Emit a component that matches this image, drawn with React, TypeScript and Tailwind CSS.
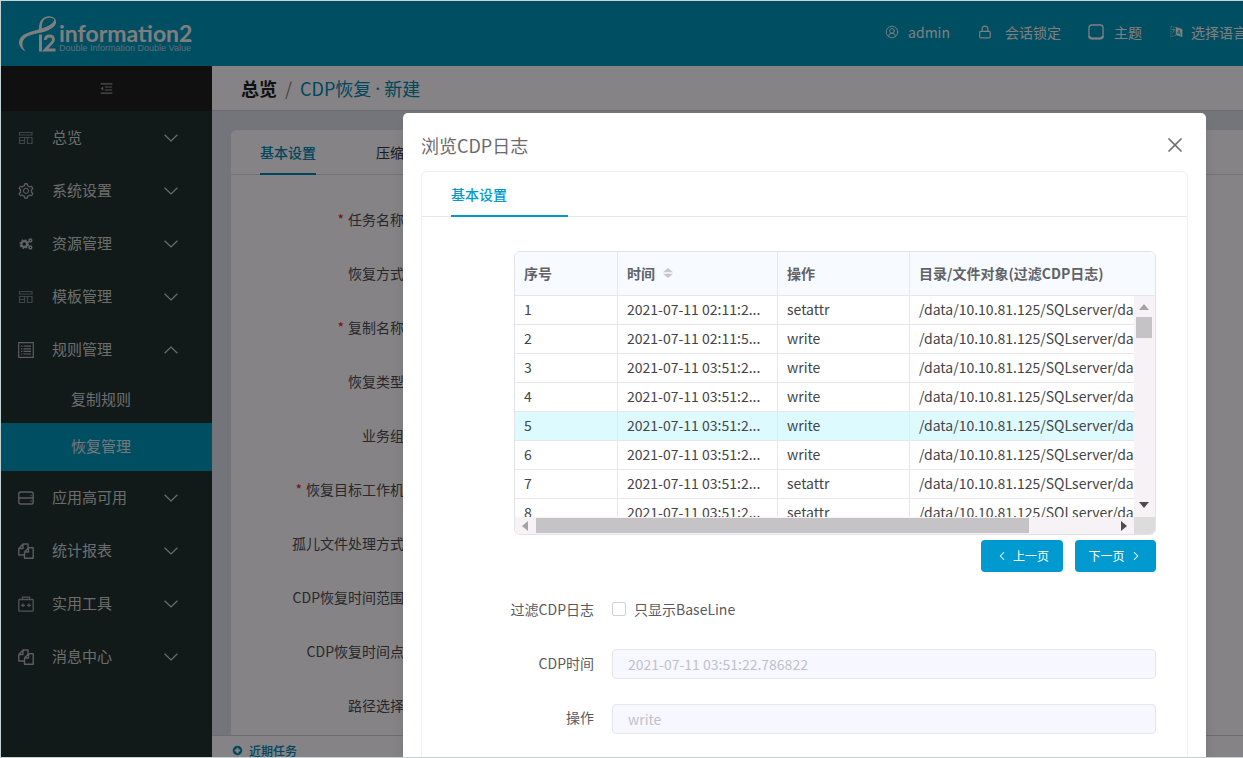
import React from "react";
import { CircleUserRound, Lock, X, ChevronLeft, ChevronRight } from "lucide-react";
import { AiOutlineMenuFold, AiOutlineSetting } from "react-icons/ai";

type IconProps = { className?: string };

const TemplateIcon = ({ className }: IconProps) => (
  <svg viewBox="0 0 16 16" className={className} fill="none" stroke="currentColor" strokeWidth="1.2">
    <path d="M1.500 2.500h12.500v2.500H1.500zM1.500 7.500h5v6h-5zM1.500 10.500h5M6.500 7.500H14v6H9.500v-6" />
  </svg>
);

const GearsIcon = ({ className }: IconProps) => (
  <svg viewBox="0 0 16 16" className={className} fill="none" stroke="currentColor">
    <circle cx="6" cy="8" r="3.300" strokeWidth="2.400" />
    <circle cx="6" cy="8" r="5" strokeWidth="1.200" strokeDasharray="2 1.930" />
    <circle cx="13" cy="4" r="1.600" strokeWidth="1.700" />
    <circle cx="13" cy="12" r="1.600" strokeWidth="1.700" />
  </svg>
);

const ListIcon = ({ className }: IconProps) => (
  <svg viewBox="0 0 16 16" className={className} fill="none" stroke="currentColor" strokeWidth="1.200">
    <path d="M.7.7h14.600v14.600H.7zM3 4.200h1.400M5.500 4.200H13M3 6.800h1.400M5.500 6.800H13M3 9.400h1.400M5.500 9.400H13M3 12h1.400M5.500 12H13" />
  </svg>
);

const ServerIcon = ({ className }: IconProps) => (
  <svg viewBox="0 0 16 16" className={className} fill="none" stroke="currentColor" strokeWidth="1.400">
    <rect x=".8" y="2" width="14.400" height="12" rx="1.800" />
    <path d="M.8 8h14.400M12.500 5.500h1M12.500 11h1" />
  </svg>
);

const FilesIcon = ({ className }: IconProps) => (
  <svg viewBox="0 0 16 16" className={className} fill="none" stroke="currentColor" strokeWidth="1.400" strokeLinejoin="round">
    <path d="M6.500 12H.8V5.500L5 1h5v3.500M5 1v4.500H.8" />
    <path d="M6.500 15.200V9l4-4.200h4.700v10.400zM10.500 4.800V9h-4" />
  </svg>
);

const ToolboxIcon = ({ className }: IconProps) => (
  <svg viewBox="0 0 16 16" className={className} fill="none" stroke="currentColor" strokeWidth="1.300">
    <rect x=".8" y="3.500" width="14.400" height="11.700" rx=".8" />
    <path d="M4.500 3.500V1.200h7v2.300" />
    <path d="M3 9.300h4M5 7.600v3.400M9 9.300h4M11 7.600v3.400" />
  </svg>
);

const MenuArrow = ({ className }: IconProps) => (
  <svg viewBox="0 0 14 8" className={className} fill="none" stroke="currentColor" strokeWidth="1.200" aria-hidden="true">
    <path d="M.6.8L7 7 13.400.8" />
  </svg>
);

const ThemeIcon = ({ className }: IconProps) => (
  <svg viewBox="0 0 16 16" className={className} fill="none" stroke="currentColor">
    <rect x="1" y="1" width="14" height="13.500" rx="2.500" strokeWidth="1.300" />
    <path d="M1.200 12.200q.3 2.300 2.500 2.300h8.600q2.200 0 2.500-2.300" strokeWidth="2.200" />
  </svg>
);

const LanguageIcon = ({ className }: IconProps) => (
  <svg viewBox="0 0 16 16" className={className} fill="none" stroke="currentColor">
    <path d="M2 2.500l6 1.500v8l-6 1.500z" strokeWidth=".7" strokeDasharray="1.500 1" />
    <path d="M3.300 6h3M4.800 5v1M3.500 9.500l2.500-3" strokeWidth=".7" />
    <path d="M7.500 3.500l6.500 2v8l-6.500-2z" fill="currentColor" strokeWidth=".5" />
    <path d="M9 10.500l1.600-4 1.800 5M9.600 9.300l2.200.6" stroke="#0096bd" strokeWidth=".8" />
  </svg>
);

const PlusCircleIcon = ({ className }: IconProps) => (
  <svg viewBox="0 0 12 12" className={className} fill="currentColor">
    <path d="M6 .8a5.200 5.200 0 1 0 0 10.400A5.200 5.200 0 0 0 6 .8zM5 3h2v2h2v2H7v2H5V7H3V5h2z" fillRule="evenodd" />
  </svg>
);

const LogoMark = () => (
  <svg viewBox="0 0 38 38" className="h-[38px] w-[38px] shrink-0" fill="none" stroke="currentColor" aria-hidden="true">
    <path
      d="M6.800 36.500C-1.500 33-2.500 24 5 19.500 12 15.500 23 14.500 30 10.500 34 8 36 5.500 35.200 2.800 39.500 7.500 36 12.500 29.500 15.200 21 18.800 9 18.500 4.800 24.500 2.300 28.500 3.500 33 6.800 36.500z"
      fill="currentColor"
      stroke="none"
    />
    <path
      d="M36.800 5.500C35.500 1.500 30 .2 25.800 2.200 21 4.500 19.800 9 20 15.500L23 14.500C22.500 9.500 23.200 5.800 26.500 3.800 29.500 2 34 2.200 36.800 5.500z"
      fill="currentColor"
      stroke="none"
    />
    <path d="M21.500 19.500V36.500" strokeWidth="3" />
    <path d="M26.300 25c.2-2.800 2-4 4.200-4 2.500 0 4 1.400 4 3.400 0 1.700-.9 2.900-2.400 4.400L26 35h10.500" strokeWidth="2.800" />
  </svg>
);

type MenuEntry = {
  label: string;
  icon: React.ReactNode;
  children?: { label: string; active?: boolean }[];
};

const menu: MenuEntry[] = [
  { label: "总览", icon: <TemplateIcon className="h-4 w-4 opacity-50" /> },
  { label: "系统设置", icon: <AiOutlineSetting className="h-[18px] w-[18px] shrink-0 opacity-80" /> },
  { label: "资源管理", icon: <GearsIcon className="h-[14px] w-[14px] opacity-90" /> },
  { label: "模板管理", icon: <TemplateIcon className="h-4 w-4 opacity-50" /> },
  {
    label: "规则管理",
    icon: <ListIcon className="h-4 w-4 opacity-80" />,
    children: [{ label: "复制规则" }, { label: "恢复管理", active: true }],
  },
  { label: "应用高可用", icon: <ServerIcon className="h-4 w-4 opacity-80" /> },
  { label: "统计报表", icon: <FilesIcon className="h-4 w-4 opacity-80" /> },
  { label: "实用工具", icon: <ToolboxIcon className="h-4 w-4 opacity-70" /> },
  { label: "消息中心", icon: <FilesIcon className="h-4 w-4 opacity-80" /> },
];

const pageFields = [
  { label: "任务名称", required: true },
  { label: "恢复方式" },
  { label: "复制名称", required: true },
  { label: "恢复类型" },
  { label: "业务组" },
  { label: "恢复目标工作机", required: true },
  { label: "孤儿文件处理方式" },
  { label: "CDP恢复时间范围" },
  { label: "CDP恢复时间点" },
  { label: "路径选择" },
];

const logPath = "/data/10.10.81.125/SQLserver/da";
const logs = [
  { time: "2021-07-11 02:11:2...", op: "setattr" },
  { time: "2021-07-11 02:11:5...", op: "write" },
  { time: "2021-07-11 03:51:2...", op: "write" },
  { time: "2021-07-11 03:51:2...", op: "write" },
  { time: "2021-07-11 03:51:2...", op: "write" },
  { time: "2021-07-11 03:51:2...", op: "write" },
  { time: "2021-07-11 03:51:2...", op: "setattr" },
  { time: "2021-07-11 03:51:2...", op: "setattr" },
];
const selectedRow = 4;

function Header() {
  return (
    <header className="flex h-[65px] shrink-0 items-center justify-between bg-[#0096bd] pl-[18px] text-[#f3f3f3]">
      <a href="#home" className="flex items-center gap-[2px] text-[#f4f1f4]">
        <LogoMark />
        <span className="flex flex-col pt-[7px]">
          <span className="font-['Lato'] text-[23px] leading-[22px] font-bold">information2</span>
          <span className="font-['Liberation_Sans'] text-[9px] leading-[9px] whitespace-nowrap opacity-70">Double Information Double Value</span>
        </span>
      </a>
      <nav className="-mr-1 flex shrink-0 items-center pb-1 text-sm whitespace-nowrap">
        <button type="button" className="mr-7 flex items-center gap-[9px]">
          <CircleUserRound className="h-[14px] w-[14px]" strokeWidth={1.6} />admin
        </button>
        <button type="button" className="mr-[27px] flex items-center gap-[13px]">
          <Lock className="h-[14px] w-[14px]" strokeWidth={2} />会话锁定
        </button>
        <button type="button" className="mr-[27px] flex items-center gap-[10px]">
          <ThemeIcon className="h-4 w-4" />主题
        </button>
        <button type="button" className="flex items-center gap-[7px]">
          <LanguageIcon className="h-[15px] w-[15px]" />选择语言
        </button>
      </nav>
    </header>
  );
}

function Sidebar() {
  return (
    <aside className="flex w-[211px] shrink-0 flex-col bg-[#213230] text-[#cfd2d2]">
      <button type="button" aria-label="收起菜单" className="flex h-[45px] shrink-0 items-center justify-center bg-[#1f1f1f] text-[#9a9a9a]">
        <AiOutlineMenuFold className="h-[15px] w-[15px]" />
      </button>
      <ul className="text-[15px]">
        {menu.map((item) => (
          <li key={item.label}>
            <button type="button" className="flex h-[53px] w-full items-center pr-[34px] pl-4">
              <span className="flex w-[18px] justify-center">{item.icon}</span>
              <span className="ml-[17px] flex-1 text-left">{item.label}</span>
              {item.children ? (
                <MenuArrow className="h-2 w-[14px] rotate-180" />
              ) : (
                <MenuArrow className="h-2 w-[14px]" />
              )}
            </button>
            {item.children && (
              <ul>
                {item.children.map((child) => (
                  <li key={child.label}>
                    <a
                      href="#rules"
                      className={
                        child.active
                          ? "flex h-12 items-center bg-[#0096bd] pb-px pl-[70px] text-[#e0e4e6]"
                          : "flex h-[47px] items-center pl-[70px]"
                      }
                    >
                      {child.label}
                    </a>
                  </li>
                ))}
              </ul>
            )}
          </li>
        ))}
      </ul>
    </aside>
  );
}

function PageBody() {
  return (
    <main className="flex min-w-0 flex-1 flex-col bg-[#dfe1eb]">
      <nav className="flex h-[45px] shrink-0 items-center border-b border-[#d0d0d6] bg-[#fffcff] pl-[29px] text-lg">
        <span className="font-bold text-[#222]">总览</span>
        <span className="mx-2 text-[#888]">/</span>
        <span className="flex gap-1 text-[#0086b0]">
          <span>CDP恢复</span>
          <span className="font-['Noto_Sans']">·</span>
          <span>新建</span>
        </span>
      </nav>
      <section className="mt-[19px] ml-[19px] flex-1 overflow-hidden rounded-tl-md bg-[#fffcff] text-sm">
        <div className="flex h-[45px] items-stretch gap-[60px] border-b border-[#dcdce4] pl-[29px]">
          <button type="button" className="-mb-px border-b-2 border-[#0086b0] font-medium text-[#0086b0]">基本设置</button>
          <button type="button" className="text-[#333]">压缩</button>
        </div>
        <ul className="w-[173px] pt-[17px] text-[#4e4e52]">
          {pageFields.map((f) => (
            <li key={f.label} className="flex h-[54px] items-center justify-end whitespace-nowrap">
              {f.required && <span className="mr-1 text-[#e02020]">*</span>}
              {f.label}
            </li>
          ))}
        </ul>
      </section>
      <footer className="flex h-[22px] shrink-0 items-center gap-[6px] overflow-hidden border-t border-[#d0d0d8] bg-[#fffcff] pt-2 pl-5 text-xs font-medium text-[#0086b0]">
        <PlusCircleIcon className="h-[11px] w-[11px]" />
        近期任务
      </footer>
    </main>
  );
}

function LogTable() {
  return (
    <div className="relative h-[284px] overflow-hidden rounded-md border border-[#e2e2ea]">
      <table className="w-full table-fixed border-separate border-spacing-0 text-left text-sm text-[#444448]">
        <colgroup>
          <col className="w-[103px]" />
          <col className="w-[160px]" />
          <col className="w-[132px]" />
          <col />
        </colgroup>
        <thead>
          <tr className="h-11 bg-[#f7faff] text-[#606266] [&>th]:border-b [&>th]:border-[#e6e6ee] [&>th]:pt-0 [&>th]:pb-[2px] [&>th]:pl-[9px] [&>th]:font-bold [&>th]:whitespace-nowrap [&>th:not(:last-child)]:border-r">
            <th>序号</th>
            <th>
              <span className="flex items-center gap-2">
                时间
                <svg viewBox="0 0 10 10" className="h-[10px] w-[10px] fill-[#c6c6cc]" aria-hidden="true">
                  <path d="M5 0l5 4.300H0zM0 5.700h10L5 10z" />
                </svg>
              </span>
            </th>
            <th>操作</th>
            <th>目录/文件对象(过滤CDP日志)</th>
          </tr>
        </thead>
        <tbody>
          {logs.map((row, i) => (
            <tr
              key={i}
              className={
                i === selectedRow
                  ? "h-[29px] bg-[#ddfaff] [&>td]:border-b [&>td]:border-[#e6e6ee] [&>td]:p-0 [&>td]:pb-[2px] [&>td]:pl-[9px] [&>td]:whitespace-nowrap [&>td:not(:last-child)]:border-r"
                  : "h-[29px] bg-white [&>td]:border-b [&>td]:border-[#e6e6ee] [&>td]:p-0 [&>td]:pb-[2px] [&>td]:pl-[9px] [&>td]:whitespace-nowrap [&>td:not(:last-child)]:border-r"
              }
            >
              <td>{i + 1}</td>
              <td>{row.time}</td>
              <td>{row.op}</td>
              <td>{logPath}</td>
            </tr>
          ))}
        </tbody>
      </table>
      <div className="absolute top-11 right-0 bottom-[17px] flex w-[21px] flex-col items-center justify-between bg-[#f7f2f6] pt-2 pr-px pb-[9px]" aria-hidden="true">
        <div className="flex flex-col items-center gap-[7px]">
          <svg viewBox="0 0 10 6" className="h-[6px] w-[10px] fill-[#a6a3a6]"><path d="M5 0l5 6H0z" /></svg>
          <div className="h-[21px] w-4 bg-[#c6c3c6]" />
        </div>
        <svg viewBox="0 0 10 6" className="h-[6px] w-[10px] fill-[#4f4c50]"><path d="M0 0h10L5 6z" /></svg>
      </div>
      <div className="absolute right-0 bottom-0 left-0 flex h-[17px] items-center bg-[#f7f2f6]" aria-hidden="true">
        <svg viewBox="0 0 6 10" className="mr-[8px] ml-[7px] h-[10px] w-[6px] shrink-0 fill-[#a6a3a6]"><path d="M6 0v10L0 5z" /></svg>
        <div className="h-[15px] w-[77%] bg-[#c6c3c6]" />
        <div className="flex-1" />
        <svg viewBox="0 0 6 10" className="mx-[7px] h-[10px] w-[6px] fill-[#4f4c50]"><path d="M0 0v10l6-5z" /></svg>
        <div className="h-full w-[21px] bg-[#dcdcdc]" />
      </div>
    </div>
  );
}

function LogDialog() {
  return (
    <div role="dialog" aria-labelledby="dialog-title" className="mt-[112px] mr-[37px] ml-[402px] flex min-w-0 flex-1 flex-col rounded-t-[5px] bg-white px-[18px] shadow-lg">
      <div className="flex h-[58px] shrink-0 items-center justify-between pt-[5px] pr-px">
        <h2 id="dialog-title" className="text-lg text-[#6a6a6e]">浏览CDP日志</h2>
        <button type="button" aria-label="关闭" className="text-[#707074]">
          <X className="h-6 w-6" strokeWidth={1.7} />
        </button>
      </div>
      <div className="flex-1 rounded-t-md border border-b-0 border-[#f3eef1]">
        <div className="flex h-[45px] items-stretch border-b border-[#e6e6ec] pl-[29px]">
          <button type="button" className="-mb-px w-[117px] border-b-2 border-[#009ad0] text-left text-sm font-medium text-[#009ad0]">基本设置</button>
        </div>
        <div className="pt-[34px] pr-[31px] pl-[92px] text-sm text-[#55555a]">
          <LogTable />
          <div className="mt-[5px] flex justify-end gap-3 text-xs text-white">
            <button type="button" className="flex h-8 w-[82px] items-center justify-center gap-1 rounded bg-[#009ad0]">
              <ChevronLeft className="h-[14px] w-[14px]" strokeWidth={1.8} />上一页
            </button>
            <button type="button" className="flex h-8 w-[81px] items-center justify-center gap-1 rounded bg-[#009ad0]">
              下一页<ChevronRight className="h-[14px] w-[14px]" strokeWidth={1.8} />
            </button>
          </div>
        </div>
        <form className="flex flex-col pt-[10px] pr-[31px] text-sm text-[#5a5a5e]">
          <div className="flex h-[55px] items-center">
            <span className="w-[172px] shrink-0 pb-[2px] text-right">过滤CDP日志</span>
            <label className="ml-[18px] flex items-center gap-2 pb-[2px]">
              <input type="checkbox" className="h-[14px] w-[14px] appearance-none rounded-[2px] border border-[#d0d0dc] bg-white" />
              只显示BaseLine
            </label>
          </div>
          <div className="flex h-[54px] items-center">
            <label htmlFor="cdp-time" className="w-[172px] shrink-0 pb-[3px] text-right">CDP时间</label>
            <input id="cdp-time" disabled defaultValue="2021-07-11 03:51:22.786822" className="ml-[18px] h-[30px] min-w-0 flex-1 rounded border border-[#e6e6ee] bg-[#f7f7ff] px-[15px] text-[#bfc1ca]" />
          </div>
          <div className="flex h-[55px] items-center">
            <label htmlFor="cdp-op" className="w-[172px] shrink-0 pb-[3px] text-right">操作</label>
            <input id="cdp-op" disabled defaultValue="write" className="ml-[18px] h-[30px] min-w-0 flex-1 rounded border border-[#e6e6ee] bg-[#f7f7ff] px-[15px] text-[#bfc1ca]" />
          </div>
        </form>
      </div>
    </div>
  );
}

export default function App() {
  return (
    <div className="relative h-screen overflow-hidden border border-r-0 border-[#c3d3d6] font-['Noto_Sans_CJK_SC',sans-serif]">
      <div className="flex h-full flex-col overflow-hidden">
        <Header />
        <div className="flex min-h-0 flex-1">
          <Sidebar />
          <PageBody />
        </div>
      </div>
      <div className="absolute inset-0 flex overflow-hidden bg-black/48">
        <LogDialog />
      </div>
    </div>
  );
}
